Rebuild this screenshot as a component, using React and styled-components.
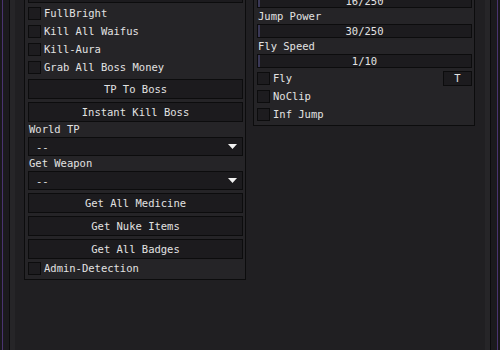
import React from 'react';
import styled, {createGlobalStyle} from 'styled-components';

const GlobalStyle = createGlobalStyle`
  html, body {
    margin: 0;
    padding: 0;
    background: #19181b;
  }
  body {
    font-family: "DejaVu Sans Mono", "Liberation Mono", monospace;
    font-size: 10.5px;
    color: #e2e2e2;
  }
`;

const Page = styled.div`
  width: 500px;
  height: 350px;
  overflow: hidden;
  padding-left: 2px;
  box-sizing: border-box;
`;

const Frame = styled.div`
  width: 496px;
  height: 350px;
  box-sizing: border-box;
  border-left: 1px solid #4a3470;
  border-right: 1px solid #4a3470;
  background: #1b1a1d;
  padding: 0 6px;
`;

const Inner = styled.div`
  height: 100%;
  box-sizing: border-box;
  border-left: 1px solid #0b0b0c;
  border-right: 1px solid #0b0b0c;
  background: #262528;
  padding: 0 5px;
`;

const Content = styled.div`
  height: 100%;
  box-sizing: border-box;
  background: #201f22;
  overflow: hidden;
  padding: 0 9px;
`;

const Columns = styled.div`
  display: flex;
  align-items: flex-start;
  gap: 7px;
  margin-top: -25px;
`;

const Panel = styled.div`
  width: 222px;
  box-sizing: border-box;
  background: #252427;
  border: 1px solid #0c0c0d;
  padding: 2px 2px 2px 3px;
  margin-top: ${p => p.$offset || 0}px;
  display: flex;
  flex-direction: column;
`;

const Button = styled.div`
  height: 20px;
  box-sizing: border-box;
  background: #1c1b1e;
  border: 1px solid #0c0c0d;
  display: flex;
  align-items: center;
  justify-content: center;
  margin-top: ${p => p.$gap || 0}px;
  white-space: pre;
`;

const Row = styled.div`
  height: 18px;
  display: flex;
  align-items: center;
  gap: 3px;
  margin-top: ${p => p.$gap || 0}px;
  white-space: pre;
`;

const Box = styled.div`
  width: 13px;
  height: 13px;
  box-sizing: border-box;
  background: #1d1c1f;
  border: 1px solid #0c0c0d;
`;

const Label = styled.div`
  height: ${p => p.$h || 15}px;
  line-height: ${p => p.$h || 15}px;
  padding-left: 1px;
  white-space: pre;
`;

const Dropdown = styled.div`
  height: 19px;
  box-sizing: border-box;
  background: #1c1b1e;
  border: 1px solid #0c0c0d;
  display: flex;
  align-items: center;
  justify-content: space-between;
  padding: 0 5px 0 7px;
`;

const Slider = styled.div`
  position: relative;
  height: 14px;
  box-sizing: border-box;
  background: #1c1b1e;
  border: 1px solid #0c0c0d;
  display: flex;
  align-items: center;
  justify-content: center;
`;

const Fill = styled.div`
  position: absolute;
  left: 0;
  top: 0;
  bottom: 0;
  background: #3a3856;
`;

const KeyButton = styled.div`
  margin-left: auto;
  width: 29px;
  height: 15px;
  box-sizing: border-box;
  background: #1c1b1e;
  border: 1px solid #0c0c0d;
  display: flex;
  align-items: center;
  justify-content: center;
`;

const Arrow = () => (
  <svg width="9" height="5" viewBox="0 0 9 5">
    <polygon points="0,0 9,0 4.5,5" fill="#f2f2f2" />
  </svg>
);

const Toggle = ({text, gap, children}) => (
  <Row $gap={gap}>
    <Box />
    {text}
    {children}
  </Row>
);

const Select = ({label}) => (
  <>
    <Label>{label}</Label>
    <Dropdown>
      <span>--</span>
      <Arrow />
    </Dropdown>
  </>
);

const Range = ({label, value, max}) => (
  <>
    <Label $h={16}>{label}</Label>
    <Slider>
      <Fill style={{width: 2}} />
      {value}/{max}
    </Slider>
  </>
);

export default function App() {
  return (
    <Page>
      <GlobalStyle />
      <Frame>
        <Inner>
          <Content>
            <Columns>
              <Panel $offset={5}>
                <Button />
                <Toggle text="FullBright" gap={1} />
                <Toggle text="Kill All Waifus" />
                <Toggle text="Kill-Aura" />
                <Toggle text="Grab All Boss Money" />
                <Button $gap={3}>TP To Boss</Button>
                <Button $gap={3}>Instant Kill Boss</Button>
                <Select label="World TP" />
                <Select label="Get Weapon" />
                <Button $gap={3}>Get All Medicine</Button>
                <Button $gap={3}>Get Nuke Items</Button>
                <Button $gap={3}>Get All Badges</Button>
                <Toggle text="Admin-Detection" />
              </Panel>
              <Panel>
                <Range label="" value={16} max={250} />
                <Range label="Jump Power" value={30} max={250} />
                <Range label="Fly Speed" value={1} max={10} />
                <Toggle text="Fly" gap={1}>
                  <KeyButton>T</KeyButton>
                </Toggle>
                <Toggle text="NoClip" />
                <Toggle text="Inf Jump" />
              </Panel>
            </Columns>
          </Content>
        </Inner>
      </Frame>
    </Page>
  );
}
